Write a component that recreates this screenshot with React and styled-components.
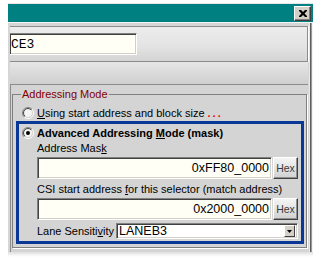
import React, { useId } from 'react';
import styled, { createGlobalStyle } from 'styled-components';

const GlobalStyle = createGlobalStyle`
  html, body {
    margin: 0;
    padding: 0;
    background: #ffffff;
  }
  body {
    font-family: "Liberation Sans", Arial, sans-serif;
    font-size: 11px;
    color: #000;
  }
`;

const Page = styled.div`
  width: 316px;
  height: 261px;
  overflow: hidden;
  box-sizing: border-box;
  padding: 3px 3px 0 8px;
  background: #fff;
`;

const Window = styled.div`
  width: 305px;
  height: 248px;
  display: flex;
  flex-direction: column;
  border-top: 1px solid #e6e6e6;
  background: #d4d4d4;
`;

const TitleBar = styled.div`
  height: 18px;
  flex: none;
  display: flex;
  align-items: center;
  justify-content: flex-end;
  padding-right: 2px;
  background: #008080;
`;

const CloseButton = styled.button`
  width: 17px;
  height: 15px;
  padding: 0;
  margin: 0;
  display: flex;
  align-items: center;
  justify-content: center;
  box-sizing: border-box;
  background: #d4d0c8;
  border: 1px solid;
  border-color: #fff #404040 #404040 #fff;
  box-shadow: inset -1px -1px #808080;
`;

const Body = styled.div`
  flex: 1;
  min-height: 0;
  display: flex;
  flex-direction: column;
  padding: 3px 5px 0 2px;
  border-top: 1px solid #f4f4f4;
  background: #d6d6d6;
  box-shadow: inset -1px 0 #f4f4f4, inset -2px 0 #9a9a9a, inset -3px 0 #5e5e5e,
    inset -4px 0 #e8e8e8;
`;

const TopPanel = styled.div`
  height: 36px;
  flex: none;
  box-sizing: border-box;
  padding-top: 6px;
  border: 1px solid #8c8c8c;
  border-left: none;
  box-shadow: 0 1px #fff, 1px 0 #fff;
  background: linear-gradient(#ececec, #e4e4e4 55%, #d4d4d4);
`;

const Band = styled.div`
  height: 22px;
  flex: none;
  background: linear-gradient(#e6e6e6, #d8d8d8 60%, #cfcfcf);
`;

const LowerPanel = styled.div`
  flex: 1;
  min-height: 0;
  overflow: hidden;
  padding: 3px 1px 0 1px;
  border-top: 1px solid #8c8c8c;
  border-left: 1px solid #8c8c8c;
  background: #d4d4d4;
`;

const Sunken = styled.div`
  box-sizing: border-box;
  background: #fffff6;
  border: 1px solid;
  border-color: #808080 #fff #fff #808080;
  box-shadow: inset 1px 1px #404040, inset -1px -1px #d4d0c8;
`;

const NameBox = styled(Sunken)`
  width: 127px;
  height: 22px;
  border-left: none;
  display: flex;
  align-items: center;
  padding-left: 1px;
  font-family: "Liberation Mono", "Courier New", monospace;
  font-size: 13px;
`;

const GroupBox = styled.fieldset`
  margin: 0;
  min-width: 0;
  padding: 0 2px 3px 3px;
  border: 1px solid #808080;
  box-shadow: 1px 1px 0 #fff;
`;

const Legend = styled.legend`
  margin-left: 5px;
  padding: 0 1px;
  line-height: 13px;
  color: #800000;
`;

const OptionRow = styled.div`
  height: 13px;
  display: flex;
  align-items: center;
  gap: 3px;
  margin-top: ${(p) => p.$top || 0}px;
  padding-left: ${(p) => p.$indent || 0}px;
  font-weight: ${(p) => (p.$bold ? 'bold' : 'normal')};
  white-space: nowrap;
`;

const Dots = styled.span`
  margin-left: 3px;
  color: #ff0000;
  font-weight: bold;
  letter-spacing: 2px;
`;

const Highlight = styled.div`
  margin-top: 2px;
  display: flex;
  flex-direction: column;
  padding: 2px 3px;
  border: 3px solid #0a3897;
`;

const FieldLabel = styled.div`
  height: ${(p) => p.$h}px;
  display: flex;
  align-items: center;
  padding-left: 15px;
  white-space: nowrap;
`;

const FieldRow = styled.div`
  height: 22px;
  display: flex;
  gap: 1px;
  padding-left: 15px;
`;

const ValueBox = styled(Sunken)`
  flex: 1;
  display: flex;
  align-items: center;
  justify-content: flex-end;
  padding-right: 2px;
  font-size: 12.5px;
`;

const HexButton = styled.div`
  width: 25px;
  box-sizing: border-box;
  display: flex;
  align-items: center;
  justify-content: center;
  border: 1px solid;
  border-color: #fff #404040 #404040 #fff;
  box-shadow: inset -1px -1px #909090;
  background: linear-gradient(#f4f4f4, #e4e4e4 50%, #d0d0d0);
  color: #3a3a3a;
  font-size: 10.5px;
`;

const LaneRow = styled.div`
  height: 16px;
  margin-top: 3px;
  display: flex;
  align-items: center;
  padding-left: 15px;
`;

const LaneLabel = styled.div`
  width: 79px;
  flex: none;
  white-space: nowrap;
`;

const Combo = styled(Sunken)`
  flex: 1;
  height: 16px;
  display: flex;
  align-items: center;
  justify-content: space-between;
  padding: 0 2px 0 2px;
  background: #fff;
  font-size: 12.5px;
`;

const ComboButton = styled.div`
  width: 11px;
  height: 12px;
  box-sizing: border-box;
  display: flex;
  align-items: center;
  justify-content: center;
  border: 1px solid;
  border-color: #fff #404040 #404040 #fff;
  background: #d4d0c8;
`;

const TornEdge = styled.div`
  width: 305px;
  height: 5px;
  background: linear-gradient(#dedede, #f4f4f4 60%, #fff);
`;

const Radio = ({ checked }) => {
  const id = useId().replace(/:/g, '');
  return (
    <svg width="12" height="12" viewBox="0 0 12 12" style={{ flex: 'none' }}>
      <defs>
        <linearGradient id={`o${id}`} x1="0" y1="0" x2="1" y2="1">
          <stop offset="0.5" stopColor="#808080" />
          <stop offset="0.5" stopColor="#ffffff" />
        </linearGradient>
        <linearGradient id={`i${id}`} x1="0" y1="0" x2="1" y2="1">
          <stop offset="0.5" stopColor="#404040" />
          <stop offset="0.5" stopColor="#d4d0c8" />
        </linearGradient>
      </defs>
      <circle cx="6" cy="6" r="5.5" fill="none" stroke={`url(#o${id})`} />
      <circle cx="6" cy="6" r="4.5" fill="#f4f4f4" stroke={`url(#i${id})`} />
      {checked && <circle cx="6" cy="6" r="2" fill="#000" />}
    </svg>
  );
};

const CloseGlyph = () => (
  <svg width="8" height="7" viewBox="0 0 8 7">
    <path d="M0 0h2l2 2 2-2h2v1L5.5 3.5 8 6v1H6L4 5 2 7H0V6l2.5-2.5L0 1z" fill="#000" />
  </svg>
);

const Arrow = () => (
  <svg width="5" height="3" viewBox="0 0 5 3">
    <polygon points="0,0 5,0 2.5,3" fill="#000" />
  </svg>
);

export default function App() {
  return (
    <Page>
      <GlobalStyle />
      <Window>
        <TitleBar>
          <CloseButton type="button" aria-label="Close">
            <CloseGlyph />
          </CloseButton>
        </TitleBar>
        <Body>
          <TopPanel>
            <NameBox>CE3</NameBox>
          </TopPanel>
          <Band />
          <LowerPanel>
            <GroupBox>
              <Legend>Addressing Mode</Legend>
              <OptionRow $top={5} $indent={6}>
                <Radio />
                <span>
                  <u>U</u>sing start address and block size
                  <Dots>...</Dots>
                </span>
              </OptionRow>
              <Highlight>
                <OptionRow $bold>
                  <Radio checked />
                  <span>
                    Advanced Addressing <u>M</u>ode (mask)
                  </span>
                </OptionRow>
                <FieldLabel $h={18}>
                  <span>
                    Address Mas<u>k</u>
                  </span>
                </FieldLabel>
                <FieldRow>
                  <ValueBox>0xFF80_0000</ValueBox>
                  <HexButton>Hex</HexButton>
                </FieldRow>
                <FieldLabel $h={19}>
                  <span>
                    CSI start address <u>f</u>or this selector (match address)
                  </span>
                </FieldLabel>
                <FieldRow>
                  <ValueBox>0x2000_0000</ValueBox>
                  <HexButton>Hex</HexButton>
                </FieldRow>
                <LaneRow>
                  <LaneLabel>
                    Lane Sensiti<u>v</u>ity
                  </LaneLabel>
                  <Combo>
                    <span>LANEB3</span>
                    <ComboButton>
                      <Arrow />
                    </ComboButton>
                  </Combo>
                </LaneRow>
              </Highlight>
            </GroupBox>
          </LowerPanel>
        </Body>
      </Window>
      <TornEdge />
    </Page>
  );
}
